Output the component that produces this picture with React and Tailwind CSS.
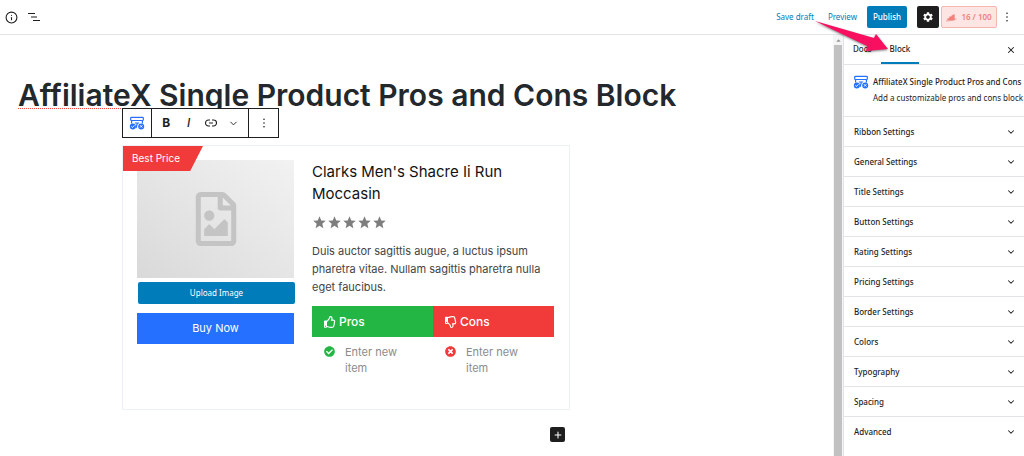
import { useState } from "react";
import { ChevronDown, Info, Plus, X } from "lucide-react";
import {
  FaCaretUp,
  FaCheckCircle,
  FaRegFileImage,
  FaRegThumbsDown,
  FaRegThumbsUp,
  FaTimesCircle,
} from "react-icons/fa";
import { MdSettings, MdStar } from "react-icons/md";

const panels = [
  "Ribbon Settings",
  "General Settings",
  "Title Settings",
  "Button Settings",
  "Rating Settings",
  "Pricing Settings",
  "Border Settings",
  "Colors",
  "Typography",
  "Spacing",
  "Advanced",
];

const BlockIcon = () => (
  <svg viewBox="0 0 16 14" className="h-[14px] w-4 shrink-0" fill="none" stroke="#2670ff">
    <rect x="1.7" y="1.3" width="12.6" height="3.2" rx="0.8" strokeWidth="1.2" />
    <path d="M2.6 4.6v3M13.4 4.6v3M5.8 7h4.4M8.4 7L7 12" strokeWidth="1.2" />
    <circle cx="3.8" cy="10.4" r="3" fill="#2670ff" stroke="none" />
    <path d="M2.3 10.4l1.1 1.1 2-2.1" stroke="#fff" strokeWidth="1" />
    <circle cx="12.2" cy="10.4" r="3" fill="#2670ff" stroke="none" />
    <path d="M11.1 9.3l2.2 2.2M13.3 9.3L11.1 11.5" stroke="#fff" strokeWidth="1" />
  </svg>
);

const Dots = () => (
  <svg viewBox="0 0 4 12" className="h-3 w-1" fill="#1e1e1e">
    <circle cx="2" cy="2.2" r="0.8" />
    <circle cx="2" cy="6" r="0.8" />
    <circle cx="2" cy="9.8" r="0.8" />
  </svg>
);

const Header = () => (
  <header className="flex h-[35px] items-center justify-between border-b border-[#e2e4e7] pr-[15px] pl-[5px]">
    <div className="flex items-center gap-[10px] text-[#1e1e1e]">
      <button aria-label="Details">
        <Info size={13} strokeWidth={2} />
      </button>
      <button aria-label="List view">
        <svg viewBox="0 0 12 10" className="h-[10px] w-3" stroke="#1e1e1e" strokeWidth="1.1">
          <path d="M0 1.5h7M3 5h6M5 8.5h7" />
        </svg>
      </button>
    </div>
    <div className="flex items-center">
      <button className="mr-[14px] text-[8px] text-[#007cba]">Save draft</button>
      <button className="mr-[10px] text-[8px] text-[#007cba]">Preview</button>
      <button className="mr-[10px] h-[22px] w-10 rounded-xs bg-[#007cba] text-[8px] font-medium text-white">
        Publish
      </button>
      <button
        aria-label="Settings"
        className="mr-[2px] flex size-[22px] items-center justify-center rounded-xs bg-[#1e1e1e] text-white"
      >
        <MdSettings size={12} />
      </button>
      <button className="mr-2 flex h-[22px] w-[56px] items-center justify-center gap-1 rounded-xs border border-[#f5b5b0] bg-[#fde5e3] text-[8px] font-semibold text-[#f0817b]">
        <svg viewBox="0 0 12 10" className="h-[9px] w-[11px]" fill="#f0817b">
          <path d="M1.5 8V5.8h2V8zM3.5 8V4h2.3v4zM5.800 8V3L9.500 1v7z" />
          <path d="M0 8.8C4 8.8 8 8 11.5 6.5" fill="none" stroke="#f0817b" strokeWidth="0.8" />
        </svg>
        16 / 100
      </button>
      <button aria-label="Options">
        <Dots />
      </button>
    </div>
  </header>
);

const Toolbar = () => (
  <div className="relative -mt-[5px] ml-[104px] flex h-[30px] w-[157px] border border-[#1e1e1e] bg-white font-[Inter,sans-serif] text-[#1e1e1e]">
    <button
      aria-label="Change block type"
      className="flex w-[29px] items-center justify-center border-r border-[#1e1e1e]"
    >
      <BlockIcon />
    </button>
    <div className="flex flex-1 items-center justify-around border-r border-[#1e1e1e] px-[3px] text-xs">
      <button className="w-4 font-bold">B</button>
      <button className="w-4 font-medium italic">I</button>
      <button aria-label="Link" className="flex w-4 justify-center">
        <svg viewBox="0 0 12 8" className="h-2 w-3" fill="none" stroke="#1e1e1e" strokeWidth="1.1">
          <path d="M5 1H3.5a3 3 0 000 6H5M7 1h1.5a3 3 0 010 6H7M4 4h4" />
        </svg>
      </button>
      <button aria-label="More" className="flex w-4 justify-center">
        <ChevronDown size={11} strokeWidth={2} />
      </button>
    </div>
    <button aria-label="Options" className="flex w-[29px] items-center justify-center">
      <Dots />
    </button>
  </div>
);

const ProsConsColumn = ({ title, color, titleIcon, itemIcon }) => (
  <div className="flex-1">
    <h3 className={`flex h-[31px] items-center gap-[3px] pl-3 text-xs font-medium text-white ${color}`}>
      {titleIcon}
      {title}
    </h3>
    <ul>
      <li className="flex gap-[10px] pt-[7px] pl-3 text-[11px] leading-4 text-[#8c8c8c]">
        {itemIcon}
        <span className="w-16">Enter new item</span>
      </li>
    </ul>
  </div>
);

const ProductCard = () => (
  <article className="relative mt-[7px] ml-[104px] flex h-[265px] w-[448px] border border-[#eef0f8] px-[14px] pt-[14px]">
    <div className="w-[157px] shrink-0">
      <div className="flex h-[118px] items-center justify-center bg-linear-to-tr from-[#d9d9d9] to-[#f2f2f2]">
        <FaRegFileImage size={54} color="#c4c4c4" />
      </div>
      <button className="mt-[4px] ml-px block h-[22px] w-full rounded-xs bg-[#007cba] text-[8px] text-white">
        Upload Image
      </button>
      <a
        href="#buy"
        className="mt-[9px] flex h-[31px] items-center justify-center bg-[#2670ff] font-[Inter,sans-serif] text-[11px] text-white"
      >
        Buy Now
      </a>
    </div>
    <div className="mr-px ml-[18px] flex-1 pt-px font-[Inter,sans-serif]">
      <h2 className="w-[200px] text-[15px] leading-[22px] text-[#131313]">
        Clarks Men's Shacre Ii Run Moccasin
      </h2>
      <div className="mt-[10px] mb-3 flex text-[#7e7e7e]">
        {[1, 2, 3, 4, 5].map((n) => (
          <MdStar key={n} size={15} />
        ))}
      </div>
      <p className="text-[11px] leading-[18px] text-[#444]">
        Duis auctor sagittis augue, a luctus ipsum pharetra vitae. Nullam sagittis pharetra nulla
        eget faucibus.
      </p>
      <div className="mt-[10px] flex">
        <ProsConsColumn
          title="Pros"
          color="bg-[#24b644]"
          titleIcon={<FaRegThumbsUp size={12} />}
          itemIcon={<FaCheckCircle size={11} color="#24b644" className="mt-[2px]" />}
        />
        <ProsConsColumn
          title="Cons"
          color="bg-[#f13a3a]"
          titleIcon={<FaRegThumbsDown size={12} />}
          itemIcon={<FaTimesCircle size={11} color="#f13a3a" className="mt-[2px]" />}
        />
      </div>
    </div>
    <div className="absolute top-0 left-0 h-[25px] w-[80px] bg-[#f13a3a] pl-[9px] font-[Inter,sans-serif] text-[10px] leading-[25px] text-white [clip-path:polygon(0_0,100%_0,84%_100%,0_100%)]">
      Best Price
    </div>
  </article>
);

const Sidebar = () => {
  const [tab, setTab] = useState("Block");

  return (
    <aside className="w-[181px] shrink-0 border-l border-[#e2e4e7] text-[#1e1e1e]">
      <div className="flex h-[30px] items-stretch border-b border-[#e2e4e7]">
        {["Docs", "Block"].map((name) => (
          <button
            key={name}
            onClick={() => setTab(name)}
            className={`border-b-2 px-[9px] text-[8px] font-medium ${
              tab === name ? "border-[#007cba]" : "border-transparent"
            }`}
          >
            {name}
          </button>
        ))}
        <button aria-label="Close settings" className="mr-2 ml-auto">
          <X size={10} strokeWidth={2.5} />
        </button>
      </div>
      <div className="flex h-[52px] gap-1 border-b border-[#e2e4e7] pt-[10px] pl-[9px] whitespace-nowrap">
        <BlockIcon />
        <div>
          <h2 className="text-[8px] leading-[14px] font-medium">AffiliateX Single Product Pros and Cons</h2>
          <p className="text-[8px] leading-[18px]">Add a customizable pros and cons block</p>
        </div>
      </div>
      {panels.map((panel) => (
        <button
          key={panel}
          className="flex h-[30px] w-full items-center justify-between border-b border-[#e2e4e7] pr-2 pl-[10px] text-[8px] font-medium last:border-b-0"
        >
          {panel}
          <ChevronDown size={10} strokeWidth={2.5} />
        </button>
      ))}
    </aside>
  );
};

const Pointer = () => (
  <svg
    viewBox="0 0 80 40"
    className="pointer-events-none absolute top-[17px] right-[133px] h-10 w-20 drop-shadow-[0_1px_1px_rgba(0,0,0,0.5)]"
    fill="#f90f5f"
  >
    <path d="M4 4L63 21L65 17L77 32L55 34L56 29Z" />
  </svg>
);

const App = () => (
  <div className="relative flex min-h-screen flex-col overflow-hidden bg-white font-['Noto_Sans',sans-serif]">
    <Header />
    <div className="flex flex-1">
      <main className="min-w-0 flex-1 pt-[42px] pl-[18px]">
        <h1 className="font-[Inter,sans-serif] text-[30px] leading-9 font-semibold whitespace-nowrap text-[#23282d]">
          <span className="underline decoration-[#ff4444] decoration-dotted decoration-1 underline-offset-2">
            AffiliateX
          </span>{" "}
          Single Product Pros and Cons Block
        </h1>
        <Toolbar />
        <ProductCard />
        <button
          aria-label="Add block"
          className="mt-[17px] ml-[532px] flex size-[15px] items-center justify-center rounded-xs bg-[#1e1e1e] text-white"
        >
          <Plus size={10} strokeWidth={2.5} />
        </button>
      </main>
      <div className="flex w-[10px] shrink-0 flex-col items-center bg-[#f5f5f5]">
        <div className="flex h-[10px] items-center text-[#999]">
          <FaCaretUp size={7} />
        </div>
        <div className="w-2 flex-1 bg-[#c1c1c1]" />
      </div>
      <Sidebar />
    </div>
    <Pointer />
  </div>
);

export default App;
